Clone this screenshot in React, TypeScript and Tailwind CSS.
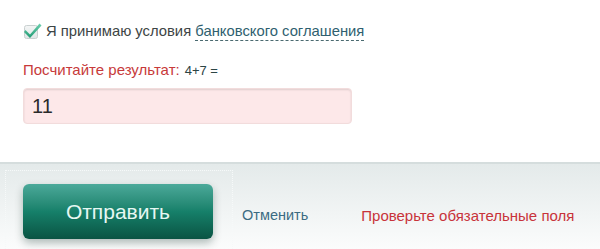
import React from "react";

export default function App() {
  return (
    <div className="w-[600px] h-[249px] overflow-hidden bg-white font-['Liberation_Sans',Arial,sans-serif] flex flex-col">
      <div className="h-[162px] shrink-0 px-[23px] pt-[21px] flex flex-col">
        <div className="flex items-center h-[20px]">
          <svg width="20" height="20" viewBox="0 0 20 20" className="shrink-0">
            <defs>
              <linearGradient id="cb" x1="0" y1="0" x2="0" y2="1">
                <stop offset="0" stopColor="#f4f6f6" />
                <stop offset="1" stopColor="#dfe5e5" />
              </linearGradient>
              <linearGradient id="ck" x1="0" y1="0" x2="0" y2="1">
                <stop offset="0" stopColor="#6fd0b0" />
                <stop offset="1" stopColor="#1f9a72" />
              </linearGradient>
            </defs>
            <rect x="1.5" y="4.5" width="13" height="13" rx="2" fill="url(#cb)" stroke="#c9d0d0" />
            <path d="M2.5 9 L7 13.5 L16.5 2.5 L18.5 4.5 L7 17 L1 11 Z" fill="url(#ck)" />
          </svg>
          <span className="ml-[3px] text-[14.8px] text-[#3d4545] leading-none">
            Я принимаю условия{" "}
            <span className="text-[#2f5f6f] border-b border-dashed border-[#4a6a70] pb-[1px]">
              банковского соглашения
            </span>
          </span>
        </div>
        <div className="mt-[21px] flex items-baseline leading-none">
          <span className="text-[15px] text-[#c73a3a]">Посчитайте результат:</span>
          <span className="ml-[5px] text-[13px] text-[#2d4545]">4+7 =</span>
        </div>
        <div className="mt-[11px] w-[329px] h-[36px] rounded-[4px] bg-[#fde8e9] border border-[#f2dcdc] shadow-[inset_0_1px_2px_rgba(0,0,0,0.12)] flex items-center pl-[8px]">
          <span className="text-[20px] text-[#2a2a2a] leading-none">11</span>
        </div>
      </div>
      <div className="flex-1 border-t-[2px] border-[#d5dddd] bg-gradient-to-b from-[#e4eaea] to-[#fbfcfc] flex pt-[6px]">
        <div className="w-[228px] ml-[5px] border-t border-l border-r border-dotted border-[#f6f9f9] flex items-start pl-[17px] pt-[13px]">
          <button className="w-[190px] h-[55px] rounded-[6px] bg-gradient-to-b from-[#4ba99a] via-[#16806a] to-[#0a5443] shadow-[0_4px_8px_rgba(0,40,30,0.3)] text-[#e6f7f2] text-[21px] leading-none flex items-center justify-center">
            Отправить
          </button>
        </div>
        <div className="flex items-start pt-[38px] pl-[9px] leading-none">
          <span className="text-[14.5px] text-[#3b6b82]">Отменить</span>
          <span className="ml-[53px] text-[15px] text-[#c8333a]">Проверьте обязательные поля</span>
        </div>
      </div>
    </div>
  );
}
